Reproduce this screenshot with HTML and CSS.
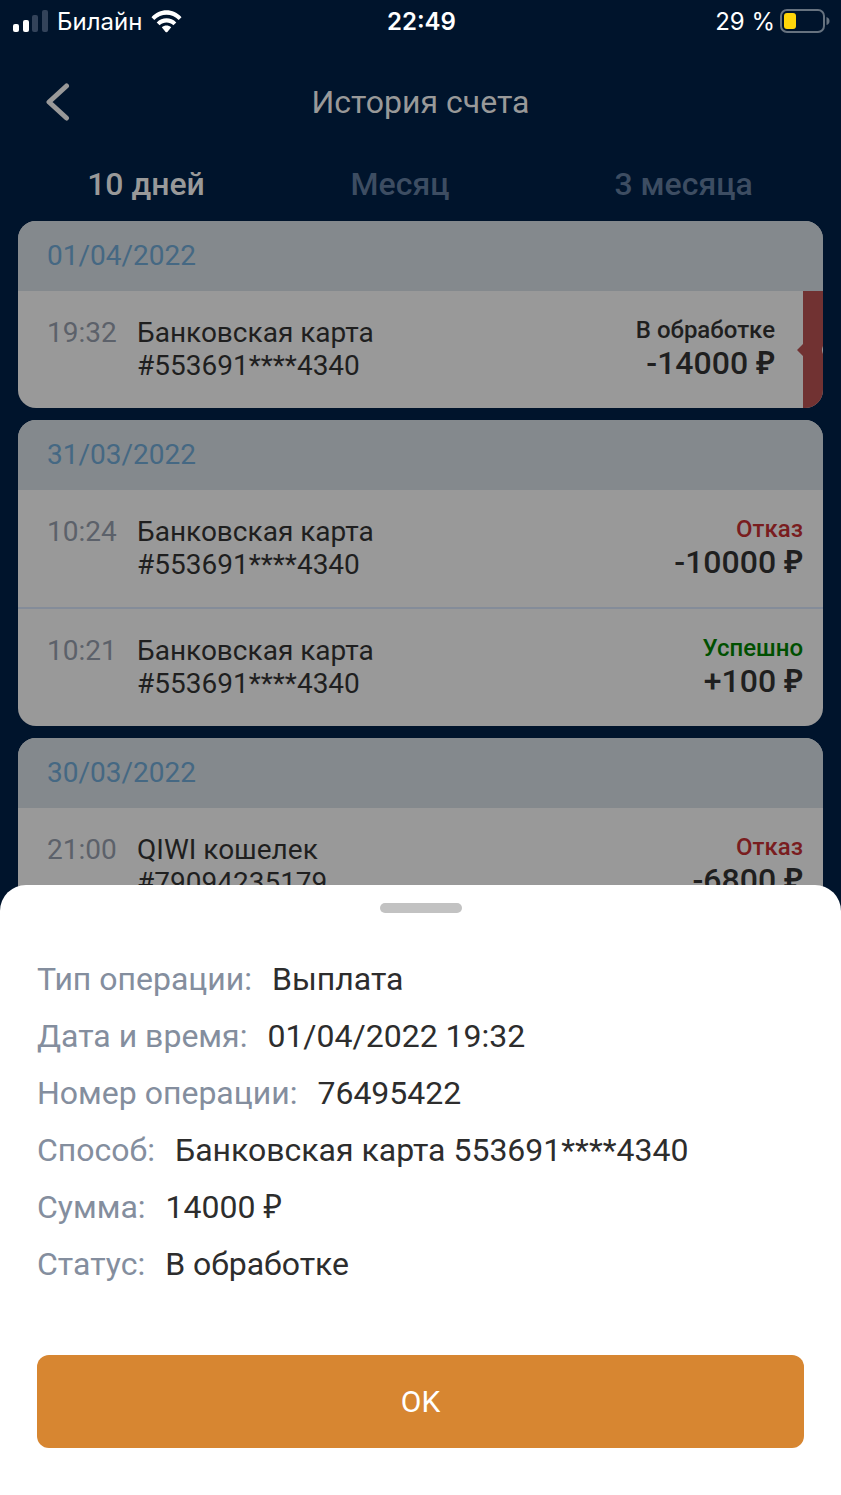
FILE: index.html
```html
<!DOCTYPE html>
<html lang="ru">
<head>
<meta charset="utf-8">
<meta name="viewport" content="width=device-width, initial-scale=1">
<title>История счета</title>
<link rel="stylesheet" href="styles.css">
</head>
<body>
<div class="screen">
  <div class="statusbar">
    <div class="carrier">
      <svg class="signal" viewBox="0 0 35 22" aria-hidden="true">
        <rect x="0" y="14" width="6" height="8" rx="2" fill="#fff"/>
        <rect x="10" y="10" width="6" height="12" rx="2" fill="#fff"/>
        <rect x="19" y="5" width="6" height="17" rx="2" fill="#33435a"/>
        <rect x="29" y="0" width="6" height="22" rx="2" fill="#33435a"/>
      </svg>
      <span>Билайн</span>
      <svg class="wifi" viewBox="0 0 31 23" aria-hidden="true">
        <path d="M0.5 7.3C8.5-2 22.500-2 30.500 7.300L27.700 10.100C21 2.900 10 2.900 3.300 10.100Z" fill="#fff"/>
        <path d="M5.700 12.400C11.200 6.800 19.800 6.800 25.300 12.400L22.400 15.200C18.500 11.500 12.500 11.500 8.600 15.200Z" fill="#fff"/>
        <path d="M10.800 17.300C13.500 15 17.500 15 20.200 17.300L16.400 21.900Q15.500 22.700 14.600 21.900Z" fill="#fff"/>
      </svg>
    </div>
    <time class="clock">22:49</time>
    <div class="battery">
      <span>29 %</span>
      <svg class="battery-icon" viewBox="0 0 50 24" aria-hidden="true">
        <rect x="1" y="1" width="43" height="22" rx="6" fill="none" stroke="#66727f" stroke-width="2"/>
        <rect x="4" y="4" width="12" height="16" rx="3" fill="#ffd60a"/>
        <path d="M46.500 8Q49.500 9 49.500 12T46.500 16Z" fill="#66727f"/>
      </svg>
    </div>
  </div>

  <header class="header">
    <button class="back" type="button" aria-label="Назад">
      <svg viewBox="0 0 24 38" aria-hidden="true"><path d="M20.500 3L3 19L20.500 35" fill="none" stroke="#999" stroke-width="5" stroke-linecap="round" stroke-linejoin="round"/></svg>
    </button>
    <h1 class="title">История счета</h1>
  </header>

  <nav class="tabs">
    <button class="tab tab-active" type="button">10 дней</button>
    <button class="tab" type="button">Месяц</button>
    <button class="tab tab-last" type="button">3 месяца</button>
  </nav>

  <main class="history">
    <section class="card">
      <h2 class="date">01/04/2022</h2>
      <div class="row row-swipe">
        <time class="time">19:32</time>
        <p class="method">Банковская карта<br>#553691****4340</p>
        <div class="result"><span class="state">В обработке</span><span class="amount">-14000 <span class="ruble">₽</span></span></div>
        <svg class="swipe" viewBox="0 0 26 117" preserveAspectRatio="none" aria-hidden="true">
          <path d="M6 0H26V117H6V65L0 59L6 53Z" fill="#713232"/>
          <path d="M26 55Q24 59 26 63Z" fill="#999"/>
        </svg>
      </div>
    </section>

    <section class="card">
      <h2 class="date">31/03/2022</h2>
      <div class="row">
        <time class="time">10:24</time>
        <p class="method">Банковская карта<br>#553691****4340</p>
        <div class="result"><span class="state state-fail">Отказ</span><span class="amount">-10000 <span class="ruble">₽</span></span></div>
      </div>
      <div class="row">
        <time class="time">10:21</time>
        <p class="method">Банковская карта<br>#553691****4340</p>
        <div class="result"><span class="state state-ok">Успешно</span><span class="amount">+100 <span class="ruble">₽</span></span></div>
      </div>
    </section>

    <section class="card">
      <h2 class="date">30/03/2022</h2>
      <div class="row">
        <time class="time">21:00</time>
        <p class="method">QIWI кошелек<br>#79094235179</p>
        <div class="result"><span class="state state-fail">Отказ</span><span class="amount">-6800 <span class="ruble">₽</span></span></div>
      </div>
    </section>
  </main>

  <div class="sheet" role="dialog" aria-label="Операция">
    <div class="handle"></div>
    <dl class="details">
      <div class="detail"><dt>Тип операции:</dt><dd>Выплата</dd></div>
      <div class="detail"><dt>Дата и время:</dt><dd>01/04/2022 19:32</dd></div>
      <div class="detail"><dt>Номер операции:</dt><dd>76495422</dd></div>
      <div class="detail"><dt>Способ:</dt><dd>Банковская карта 553691****4340</dd></div>
      <div class="detail"><dt>Сумма:</dt><dd>14000 <span class="ruble">₽</span></dd></div>
      <div class="detail"><dt>Статус:</dt><dd>В обработке</dd></div>
    </dl>
    <button class="ok" type="button">OK</button>
  </div>
</div>
</body>
</html>
```
FILE: styles.css
```css
* { box-sizing: border-box; }

body, h1, h2, p, dl, dd { margin: 0; }

body {
  background: #00142c;
  font-family: Roboto, "Noto Sans", sans-serif;
}

button {
  padding: 0;
  border: 0;
  background: none;
  font-family: inherit;
}

svg { display: block; }

.screen {
  position: relative;
  height: 100vh;
  overflow: hidden;
}

.statusbar {
  display: grid;
  grid-template-columns: 1fr auto 1fr;
  align-items: center;
  height: 42px;
  padding: 0 11px 0 13px;
  color: #fff;
  font-family: Inter, sans-serif;
  font-size: 24px;
}

.carrier, .battery {
  display: flex;
  align-items: center;
  gap: 9px;
}

.battery {
  justify-content: flex-end;
  gap: 5px;
}

.signal { width: 35px; height: 22px; }
.wifi { width: 31px; height: 23px; }
.battery-icon { width: 50px; height: 24px; }
.clock { font-weight: 600; }

.header {
  display: grid;
  grid-template-columns: 46px 1fr 46px;
  align-items: center;
  height: 120px;
  padding: 0 24px;
}

.back {
  display: flex;
  justify-content: flex-end;
}

.back svg { width: 24px; height: 38px; }

.title {
  color: #999;
  font-size: 32px;
  font-weight: 400;
  text-align: center;
}

.tabs {
  display: grid;
  grid-template-columns: 292fr 216fr 333fr;
  height: 59px;
}

.tab {
  padding-bottom: 16px;
  color: #3d4d62;
  font-size: 32px;
  font-weight: 500;
}

.tab-active { color: #999; }
.tab-last { padding-left: 18px; }

.history {
  display: flex;
  flex-direction: column;
  gap: 12px;
  padding: 0 18px;
}

.card {
  overflow: hidden;
  border-radius: 18px;
  background: #999;
}

.date {
  padding: 0 29px;
  background: #84898d;
  color: #456883;
  font-size: 28px;
  font-weight: 400;
  line-height: 70px;
}

.row {
  position: relative;
  display: flex;
  padding: 25px 20px 25px 29px;
  font-size: 28px;
  line-height: 33px;
}

.row + .row { border-top: 2px solid #848c99; }
.row-swipe { padding-right: 48px; }

.time {
  width: 90px;
  color: #5c616a;
}

.method {
  flex: 1;
  color: #1f1f1f;
}

.result {
  display: flex;
  flex-direction: column;
  align-items: flex-end;
  color: #1f1f1f;
  font-weight: 500;
}

.state {
  font-size: 24px;
  line-height: 28px;
}

.state-fail { color: #791d1f; }
.state-ok { color: #005000; }

.amount {
  font-size: 32px;
  line-height: 39px;
}

.ruble {
  font-family: "Open Sans", "Noto Sans", sans-serif;
  line-height: 1;
}

.amount .ruble { font-weight: 600; }

.swipe {
  position: absolute;
  top: 0;
  right: 0;
  width: 26px;
  height: 100%;
}

.sheet {
  position: absolute;
  right: 0;
  bottom: 0;
  left: 0;
  padding: 18px 37px 47px;
  border-radius: 26px 26px 0 0;
  background: #fff;
}

.handle {
  width: 82px;
  height: 10px;
  margin: 0 auto 38px;
  border-radius: 5px;
  background: #c2c2c2;
}

.detail {
  display: flex;
  gap: 20px;
  font-size: 32px;
  line-height: 57px;
}

.detail dt { color: #848e9e; }
.detail dd { color: #2d2d2d; }

.ok {
  width: 100%;
  height: 93px;
  margin-top: 62px;
  border-radius: 12px;
  background: #d78631;
  color: #fff;
  font-size: 30px;
}
```
